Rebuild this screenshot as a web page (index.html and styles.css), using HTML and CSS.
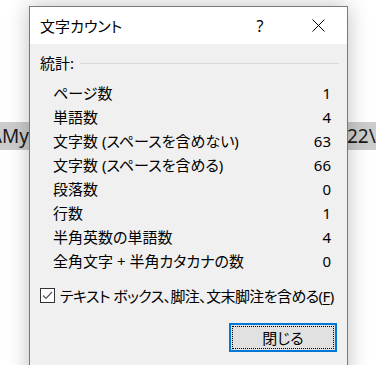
FILE: index.html
```html
<!DOCTYPE html>
<html lang="ja">
<head>
    <meta charset="UTF-8">
    <title>文字カウント</title>
    <link rel="stylesheet" href="styles.css">
</head>
<body>
    <div class="doc-band">
        <div class="band-left">s\My</div>
        <div class="band-mid"></div>
        <div class="band-right">22\6</div>
    </div>

    <div class="dialog">
        <div class="titlebar">
            <span class="title">文字カウント</span>
            <span class="cap-btn help">?</span>
            <span class="cap-btn close">
                <svg width="13" height="13" viewBox="0 0 13 13"><path d="M0.5 0.5L12.5 12.5M12.5 0.5L0.5 12.5" stroke="#000" stroke-width="1" fill="none"/></svg>
            </span>
        </div>
        <div class="content">
            <div class="group-head">
                <span>統計:</span>
                <span class="rule"></span>
            </div>
            <div class="stats">
                <div class="row"><span>ページ数</span><span class="num">1</span></div>
                <div class="row"><span>単語数</span><span class="num">4</span></div>
                <div class="row"><span>文字数 (スペースを含めない)</span><span class="num">63</span></div>
                <div class="row"><span>文字数 (スペースを含める)</span><span class="num">66</span></div>
                <div class="row"><span>段落数</span><span class="num">0</span></div>
                <div class="row"><span>行数</span><span class="num">1</span></div>
                <div class="row"><span>半角英数の単語数</span><span class="num">4</span></div>
                <div class="row"><span>全角文字 + 半角カタカナの数</span><span class="num">0</span></div>
            </div>
            <label class="check">
                <span class="box">
                    <svg width="13" height="13" viewBox="0 0 13 13"><path d="M2 6.5L5 9.5L11 3" stroke="#555" stroke-width="1.2" fill="none"/></svg>
                </span>
                <span class="check-text">テキスト ボックス、脚注、文末脚注を含める(<u>F</u>)</span>
            </label>
            <div class="actions">
                <button class="btn"><span class="focus">閉じる</span></button>
            </div>
        </div>
    </div>
</body>
</html>
```

FILE: styles.css
```css
body {
    margin: 0;
    background: #fff;
    font-family: "Noto Sans", "Noto Sans CJK JP", sans-serif;
    font-feature-settings: "palt";
    color: #000;
    overflow: hidden;
    height: 365px;
}

/* document text behind the dialog */
.doc-band {
    display: flex;
    margin-top: 122px;
    height: 28px;
    background: #cccccc;
    font-size: 19px;
    line-height: 28px;
    color: #1a1a1a;
}
.band-left {
    width: 29px;
    display: flex;
    justify-content: flex-end;
    overflow: hidden;
    white-space: nowrap;
}
.band-mid {
    flex: 1;
}
.band-right {
    width: 29px;
    overflow: hidden;
    white-space: nowrap;
    padding-left: 1px;
}

.dialog {
    position: absolute;
    left: 29px;
    top: 6px;
    width: 317px;
    height: 380px;
    border: 1px solid #7a7a7a;
    background: #f0f0f0;
    box-shadow: 0 0 20px rgba(0, 0, 0, 0.25);
    font-size: 15px;
}

.titlebar {
    display: flex;
    align-items: center;
    height: 37px;
    background: #fff;
}
.title {
    flex: 1;
    padding-left: 10px;
}
.cap-btn {
    width: 58px;
    height: 37px;
    display: flex;
    align-items: center;
    justify-content: center;
}
.help {
    font-size: 16px;
}
.close svg {
    display: block;
}

.content {
    padding: 7px 10px 0 10px;
}

.group-head {
    display: flex;
    align-items: center;
    height: 24px;
    line-height: 24px;
}
.rule {
    flex: 1;
    height: 1px;
    background: #d9d9d9;
    margin-left: 6px;
    margin-right: -2px;
}

.stats {
    margin-top: 6px;
    padding-left: 13px;
    padding-right: 6px;
}
.row {
    display: flex;
    justify-content: space-between;
    height: 24px;
    line-height: 24px;
}

.check {
    display: flex;
    align-items: center;
    margin-top: 10px;
    height: 24px;
    gap: 5px;
}
.check-text {
    white-space: nowrap;
    letter-spacing: -0.6px;
}
.box {
    width: 13px;
    height: 13px;
    border: 1px solid #333;
    background: #fff;
    display: block;
    flex: none;
}
.box svg {
    display: block;
}
.check u {
    text-decoration-thickness: 1px;
    text-underline-offset: 2px;
}

.actions {
    display: flex;
    justify-content: flex-end;
    margin-top: 16px;
}
.btn {
    width: 108px;
    height: 29px;
    padding: 1px;
    border: 2px solid #0078d7;
    background: #e1e1e1;
    font-family: inherit;
    font-feature-settings: "palt";
    font-size: 15px;
    color: #000;
}
.focus {
    display: flex;
    align-items: center;
    justify-content: center;
    height: 100%;
    border: 1px dotted #000;
    box-sizing: border-box;
}
```
